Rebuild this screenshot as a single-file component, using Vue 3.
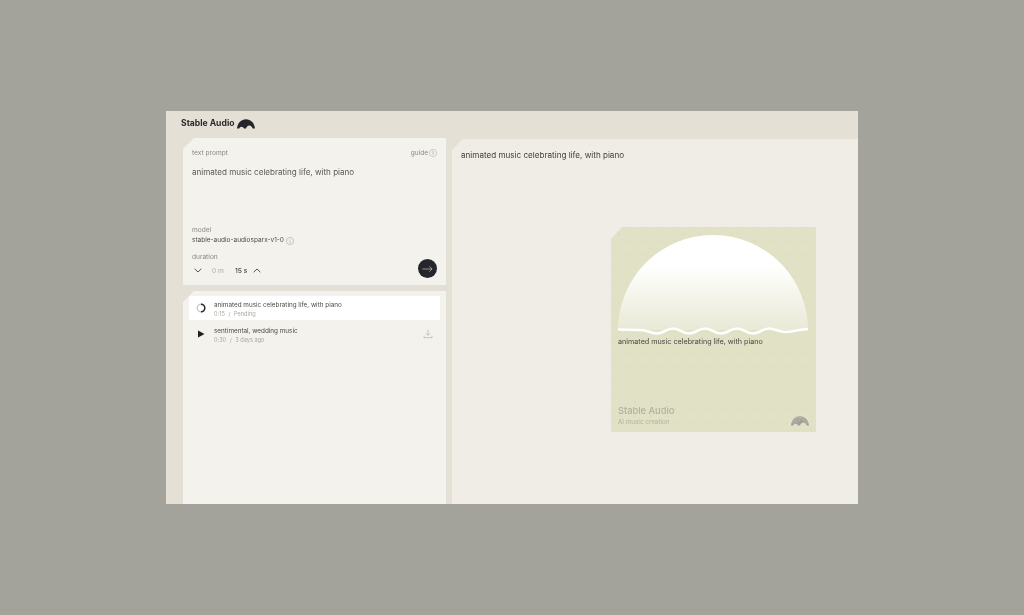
<script setup>
const tracks = [
  { id: 1, title: 'animated music celebrating life, with piano', time: '0:15', meta: 'Pending', active: true },
  { id: 2, title: 'sentimental, wedding music', time: '0:30', meta: '3 days ago', active: false },
]
const logoPath = 'M0 9.500C.5 4 4.300.3 9 .3s8.500 3.700 9 9.200h-2.300C15.300 7.800 13.800 6.400 12.200 6.400 10.600 6.400 9.400 7.800 9 9.500H6.900C6.500 8.500 5.600 7.800 4.600 7.800 3.500 7.800 2.700 8.500 2.300 9.500z'
</script>

<template>
  <div class="stage">
    <div class="app">
      <header class="topbar">
        <span class="brand">Stable Audio</span>
        <svg class="logo" viewBox="0 0 18 10" width="18" height="10">
          <path :d="logoPath" fill="#26262a"/>
        </svg>
      </header>
      <main class="columns">
        <section class="left">
          <div class="card prompt">
            <div class="row-between">
              <span class="label">text prompt</span>
              <span class="guide">guide
                <svg class="info" viewBox="0 0 8 8" width="8" height="8"><circle cx="4" cy="4" r="3.600" fill="none" stroke="#bdbcb6" stroke-width=".7"/><path d="M4 6V2.400M3 3.400 4 2.400l1 1" fill="none" stroke="#a09f99" stroke-width=".5"/></svg>
              </span>
            </div>
            <p class="prompt-text">animated music celebrating life, with piano</p>
            <div class="model">
              <span class="label">model</span>
              <span class="model-name">stable-audio-audiosparx-v1-0
                <svg class="info" viewBox="0 0 8 8" width="8" height="8"><circle cx="4" cy="4" r="3.600" fill="none" stroke="#b5b4ae" stroke-width=".7"/><path d="M4 3.400V6M4 2v.7" fill="none" stroke="#a09f99" stroke-width=".6"/></svg>
              </span>
            </div>
            <div class="duration">
              <span class="label">duration</span>
              <div class="duration-row">
                <div class="stepper">
                  <svg viewBox="0 0 8 5" width="8" height="5"><path d="M.6.8 4 4 7.400.8" fill="none" stroke="#55554f" stroke-width="1"/></svg>
                  <span class="minutes">0 m</span>
                  <span class="seconds">15 s</span>
                  <svg viewBox="0 0 8 5" width="8" height="5"><path d="M.6 4.200 4 1l3.400 3.200" fill="none" stroke="#55554f" stroke-width="1"/></svg>
                </div>
                <button class="go" aria-label="generate">
                  <svg viewBox="0 0 12 8" width="11" height="8"><path d="M.5 4h10.500M8 1l3 3-3 3" fill="none" stroke="#d6d5cf" stroke-width=".7"/></svg>
                </button>
              </div>
            </div>
          </div>
          <div class="card list">
            <div v-for="t in tracks" :key="t.id" class="track" :class="{ active: t.active }">
              <svg v-if="t.active" class="state" viewBox="0 0 10 10" width="10" height="10">
                <circle cx="5" cy="5" r="3.800" fill="none" stroke="#cfcec8" stroke-width="1.500"/>
                <path d="M5 1.200A3.800 3.800 0 0 1 5 8.800" fill="none" stroke="#2c2c2c" stroke-width="1.500"/>
              </svg>
              <svg v-else class="state" viewBox="0 0 10 10" width="10" height="10">
                <path d="M2 1.500 8.500 5 2 8.500z" fill="#1f1f1f"/>
              </svg>
              <div class="track-text">
                <span class="track-title">{{ t.title }}</span>
                <span class="track-meta">{{ t.time }} <i>/</i> {{ t.meta }}</span>
              </div>
              <svg v-if="!t.active" class="dl" viewBox="0 0 10 10" width="10" height="10">
                <path d="M5 .8v5.400M3 4.400l2 2 2-2M1 6.800v1.900h8V6.800" fill="none" stroke="#bfbeb7" stroke-width=".9"/>
              </svg>
            </div>
          </div>
        </section>
        <section class="right">
          <h1 class="heading">animated music celebrating life, with piano</h1>
          <figure class="art">
            <svg class="sun" viewBox="0 0 190 100" width="190" height="100">
              <defs>
                <linearGradient id="sunfill" x1="0" y1="0" x2="0" y2="1">
                  <stop offset=".32" stop-color="#ffffff"/>
                  <stop offset="1" stop-color="#e9e9d6"/>
                </linearGradient>
              </defs>
              <path d="M0 95A95 95 0 0 1 190 95z" fill="url(#sunfill)"/>
              <path d="M0 94.500c8 0 14 .5 22 .5 8 0 11 3.500 17 3.500S49 93.500 55 93.500s10 5 16 5 10-5 16-5 10 5 16 5 10-5 16-5 10 5 16 5 10-5 16-5 10 3.500 16 3.500c7 0 10-2 23-3" fill="none" stroke="#fff" stroke-width="2.600"/>
            </svg>
            <figcaption class="art-title">animated music celebrating life, with piano</figcaption>
            <div class="art-foot">
              <div>
                <div class="art-brand">Stable Audio</div>
                <div class="art-sub">AI music creation</div>
              </div>
              <svg viewBox="0 0 18 10" width="18" height="10">
                <path :d="logoPath" fill="#a0a096"/>
                <path d="M3 8.500C3.700 5 6 2.600 9 2.600s5.300 2.400 6 5.900M1.500 7.500C2.300 3.700 5.300 1.500 9 1.500s6.700 2.200 7.500 6M5.500 7C6.200 5.500 7.500 4.400 9 4.400" fill="none" stroke="#d5d5c2" stroke-width=".4"/>
              </svg>
            </div>
          </figure>
        </section>
      </main>
    </div>
  </div>
</template>

<style>
html, body { margin: 0; background: #a3a29b; }
</style>

<style scoped>
.stage {
  width: 100vw;
  height: 100vh;
  background: #a3a29b;
  display: flex;
  align-items: center;
  justify-content: center;
  font-family: Inter, "Liberation Sans", sans-serif;
  color: #55554f;
  overflow: hidden;
}
.app {
  width: 692px;
  height: 393px;
  background-color: #e4e0d6;
  display: flex;
  flex-direction: column;
  filter: blur(.4px);
}
.topbar {
  height: 27px;
  padding: 0 0 3px 15px;
  display: flex;
  align-items: center;
  gap: 2px;
  box-sizing: border-box;
}
.brand { font-size: 8.600px; font-weight: 700; color: #2a2a2a; }
.logo { display: block; margin-top: 1px; }
.columns {
  flex: 1;
  min-height: 0;
  display: flex;
  gap: 6px;
  padding-left: 17px;
}
.left {
  width: 263px;
  display: flex;
  flex-direction: column;
  gap: 6px;
}
.card {
  background-color: #f3f2ed;
  clip-path: polygon(11px 0, 100% 0, 100% 100%, 0 100%, 0 11px);
}
.prompt {
  height: 147px;
  box-sizing: border-box;
  padding: 11px 9px 0 9px;
  display: flex;
  flex-direction: column;
}
.row-between { display: flex; justify-content: space-between; align-items: center; height: 8px; }
.label { font-size: 6.600px; color: #8a8983; line-height: 8px; display: block; }
.guide { font-size: 6.500px; color: #8a8983; display: flex; align-items: center; gap: 1px; }
.info { display: block; }
.prompt-text { margin: 9px 0 0; font-size: 8.050px; line-height: 12px; color: #5a5a54; }
.model { margin-top: 48px; }
.model-name { display: flex; align-items: center; gap: 2px; margin-top: 2px; font-size: 6.500px; line-height: 9px; color: #4c4c46; }
.duration { margin-top: 8px; }
.duration-row { display: flex; align-items: center; justify-content: space-between; margin-top: -2px; }
.stepper { display: flex; align-items: center; padding-left: 2px; margin-top: 4px; }
.minutes { font-size: 6.700px; color: #adaca6; margin-left: 10px; }
.seconds { font-size: 6.700px; color: #4c4c46; font-weight: 500; margin-left: 11px; margin-right: 6px; }
.go {
  width: 19px;
  height: 19px;
  border: 0;
  padding: 0;
  border-radius: 50%;
  background: #25252b;
  display: flex;
  align-items: center;
  justify-content: center;
}
.list {
  flex: 1;
  padding: 5px 6px 0 6px;
  display: flex;
  flex-direction: column;
}
.track {
  height: 24px;
  box-sizing: border-box;
  padding: 0 7px;
  display: flex;
  align-items: center;
  border-radius: 1px;
}
.track + .track { margin-top: 2px; }
.track.active { background: #ffffff; }
.state { flex: none; margin-right: 8px; }
.track-text { flex: 1; display: flex; flex-direction: column; gap: 2px; padding-top: 2px; }
.track-title { font-size: 6.350px; line-height: 8px; color: #4c4c46; }
.track-meta { font-size: 5.600px; line-height: 7px; color: #a9a8a2; }
.track-meta i { font-style: normal; margin: 0 2px; }
.dl { flex: none; }
.right {
  flex: 1;
  background-color: #efede6;
  background-image: radial-gradient(circle, #e5e3db .5px, transparent .8px);
  background-size: 12px 12px;
  clip-path: polygon(11px 0, 100% 0, 100% 100%, 0 100%, 0 11px);
  padding: 11px 0 0 9px;
  box-sizing: border-box;
  margin-top: 1px;
}
.heading { margin: 0; font-size: 8.100px; font-weight: 400; line-height: 10px; color: #3e3e39; }
.art {
  margin: 67px 0 0 150px;
  width: 205px;
  height: 205px;
  box-sizing: border-box;
  padding: 8px 7px 6px 7px;
  background-color: #e1e1c6;
  background-image:
    radial-gradient(circle, #d2d2bd .5px, transparent .8px),
    radial-gradient(circle, #d2d2bd .5px, transparent .8px);
  background-size: 16px 14px;
  background-position: 0 0, 8px 7px;
  clip-path: polygon(11px 0, 100% 0, 100% 100%, 0 100%, 0 12px);
  display: flex;
  flex-direction: column;
}
.sun { display: block; flex: none; }
.art-title { margin-top: 2px; font-size: 7.200px; line-height: 9px; color: #46463f; }
.art-foot { margin-top: auto; display: flex; justify-content: space-between; align-items: flex-end; }
.art-brand { font-size: 9.300px; font-weight: 500; line-height: 11px; color: #b0b0a0; }
.art-sub { font-size: 6.300px; line-height: 8px; color: #b0b0a0; margin-top: 2px; }
</style>
